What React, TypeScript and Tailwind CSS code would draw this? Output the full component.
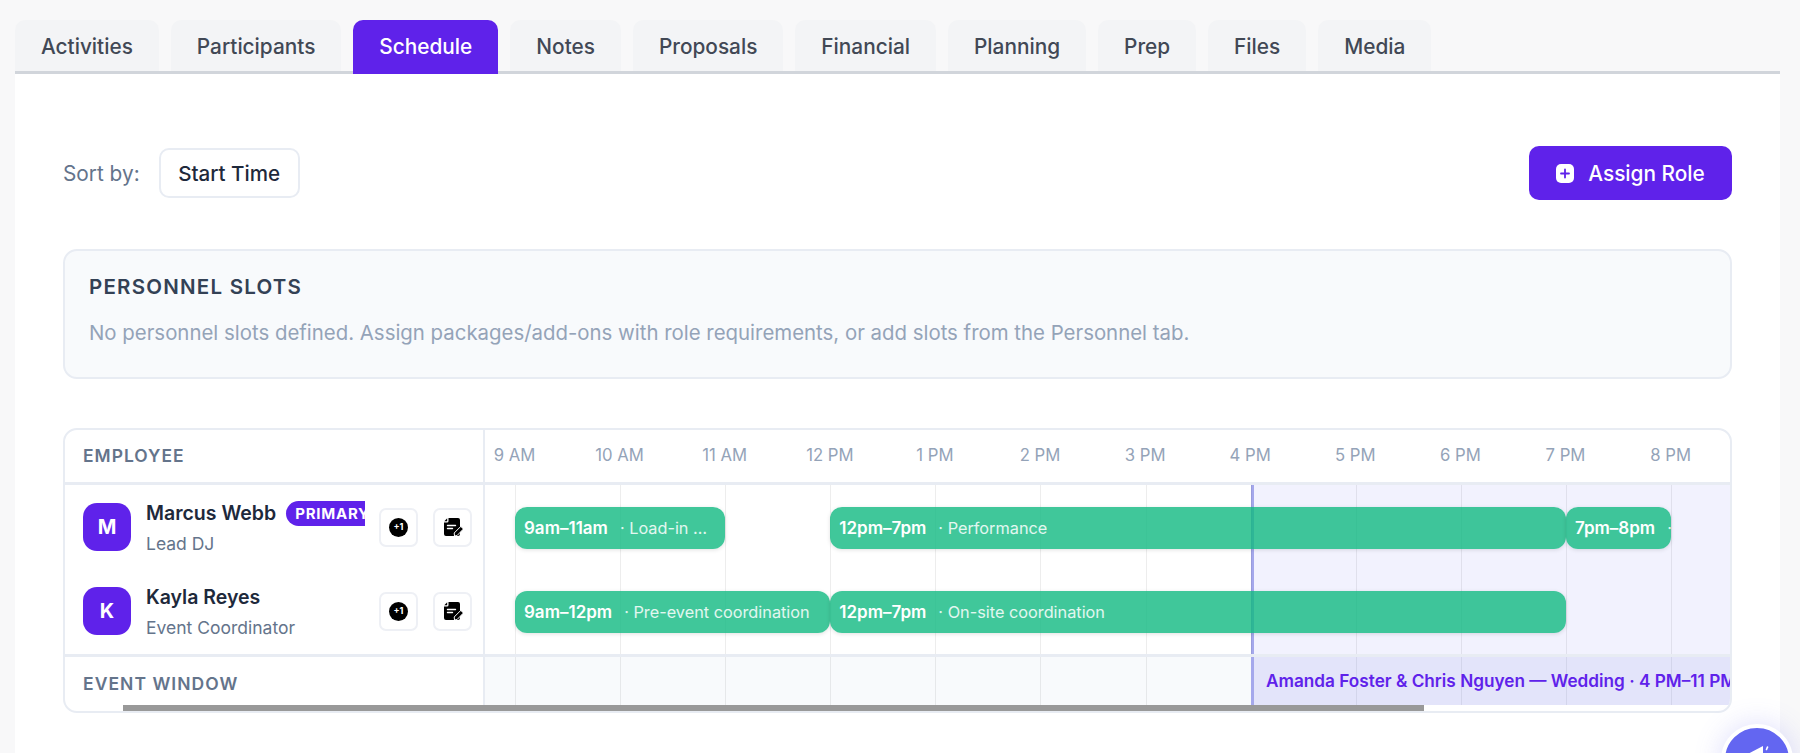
import { Fragment } from "react";

const TABS = ["Activities", "Participants", "Schedule", "Notes", "Proposals", "Financial", "Planning", "Prep", "Files", "Media"];
const HOURS = ["9 AM", "10 AM", "11 AM", "12 PM", "1 PM", "2 PM", "3 PM", "4 PM", "5 PM", "6 PM", "7 PM", "8 PM"];
const HOUR_W = 105.1;
const FIRST_LINE = 30;

const BARS = [
  { row: 0, start: 9, end: 11, time: "9am–11am", label: "Load-in & setup" },
  { row: 0, start: 12, end: 19, time: "12pm–7pm", label: "Performance" },
  { row: 0, start: 19, end: 20, time: "7pm–8pm", label: "Load-out" },
  { row: 1, start: 9, end: 12, time: "9am–12pm", label: "Pre-event coordination" },
  { row: 1, start: 12, end: 19, time: "12pm–7pm", label: "On-site coordination" },
];

const PEOPLE = [
  { initial: "M", name: "Marcus Webb", role: "Lead DJ", primary: true },
  { initial: "K", name: "Kayla Reyes", role: "Event Coordinator", primary: false },
];

function PlusSquare() {
  return (
    <svg width="18" height="19" viewBox="0 0 18 19" className="shrink-0">
      <rect x="0" y="0" width="18" height="19" rx="5" fill="#fff" />
      <path d="M9 5.5v8M5 9.5h8" stroke="#5f22ea" strokeWidth="1.8" strokeLinecap="round" />
    </svg>
  );
}

function NoteIcon() {
  return (
    <svg width="20" height="20" viewBox="0 0 20 20">
      <path d="M5.5 1H15a2 2 0 0 1 2 2v14a2 2 0 0 1-2 2H3a2 2 0 0 1-2-2V5.5H4a1.5 1.5 0 0 0 1.5-1.5z" fill="#000" />
      <path d="M1.3 4.2 4.2 1.2V4.2z" fill="#000" />
      <path d="M4.5 8.5h8M4.5 11.5h5" stroke="#fff" strokeWidth="1.4" strokeLinecap="round" />
      <path d="M11.5 19l-.3-3 6.6-6.6 2.6 2.6-6.4 6.6z" fill="#000" stroke="#fff" strokeWidth="1" />
    </svg>
  );
}

function IconButton({ children }: { children: React.ReactNode }) {
  return (
    <div className="flex h-[39px] w-[39px] items-center justify-center rounded-[7px] border-2 border-[#eef0f5] bg-white">
      {children}
    </div>
  );
}

function PersonRow({ p }: { p: (typeof PEOPLE)[number] }) {
  return (
    <div className="flex h-[84px] items-center pl-[18px]">
      <div className="flex h-12 w-12 shrink-0 items-center justify-center rounded-[14px] bg-[#5f22ea] text-[20px] font-bold text-white">
        {p.initial}
      </div>
      <div className="ml-[15px] w-[219px] shrink-0 overflow-hidden pt-[3px]">
        <div className="flex items-center gap-[10px]">
          <span className="shrink-0 text-[19.5px] leading-[26px] font-semibold whitespace-nowrap text-[#1e293b]">{p.name}</span>
          {p.primary && (
            <span className="shrink-0 rounded-l-full bg-[#5f22ea] py-[2px] pr-2 pl-[9px] text-[15px] leading-[21px] font-bold tracking-[0.05em] whitespace-nowrap text-white">
              PRIMARY
            </span>
          )}
        </div>
        <div className="mt-[5px] text-[17.5px] leading-[26px] text-[#64748b]">{p.role}</div>
      </div>
      <div className="ml-[14px] flex gap-[15px]">
        <IconButton>
          <div className="flex h-[19px] w-[19px] items-center justify-center rounded-full bg-black text-[9px] font-bold text-white">
            +1
          </div>
        </IconButton>
        <IconButton>
          <NoteIcon />
        </IconButton>
      </div>
    </div>
  );
}

function GridLines() {
  return (
    <div className="absolute inset-y-0 left-[30px] flex">
      {HOURS.map((h) => (
        <div key={h} className="w-[105.1px] shrink-0 border-l border-black/[0.07]" />
      ))}
    </div>
  );
}

function Bar({ b }: { b: (typeof BARS)[number] }) {
  return (
    <div
      className="absolute flex h-[42px] items-center overflow-hidden rounded-[12px] bg-[#10b981]/80 pt-[1px] pr-[14px] pl-[9px] shadow-[0_1px_4px_rgba(0,0,0,0.12)]"
      style={{
        left: FIRST_LINE + (b.start - 9) * HOUR_W,
        width: (b.end - b.start) * HOUR_W,
        top: 22 + b.row * 84,
      }}
    >
      <span className="shrink-0 text-[17px] font-semibold whitespace-nowrap text-white">{b.time}</span>
      <span className="ml-[12px] min-w-[16px] truncate text-[16.3px] text-white/85">· {b.label}</span>
    </div>
  );
}

export default function App() {
  return (
    <div className="relative h-[753px] overflow-hidden bg-[#f8f8f9] pt-5 pr-5 pl-[15px] font-['Inter',sans-serif]">
      <div className="flex h-[54px] gap-[12px] border-b-[3px] border-[#d1d5db]">
        {TABS.map((t) => (
          <div
            key={t}
            className={
              t === "Schedule"
                ? "h-[54px] rounded-t-[10px] bg-[#5f22ea] px-[26px] pt-[14px] text-[20.8px] leading-[26px] font-medium text-white"
                : "h-[51px] rounded-t-[10px] bg-[#f3f4f6] px-[26px] pt-[14px] text-[20.8px] leading-[26px] font-medium text-[#414855]"
            }
          >
            {t}
          </div>
        ))}
      </div>

      <div className="h-[679px] bg-white px-12 pt-[72px]">
        <div className="flex h-[54px] items-center justify-between">
          <div className="flex items-center gap-[19px]">
            <span className="pt-[1px] text-[20.8px] text-[#64748b]">Sort by:</span>
            <div className="flex h-[50px] w-[141px] items-center justify-center rounded-[10px] border-2 border-[#e8ecf3] pt-[2px] text-[20.6px] font-medium text-[#1e293b]">
              Start Time
            </div>
          </div>
          <div className="flex h-[54px] w-[203px] items-center justify-center gap-[14px] rounded-[10px] bg-[#5f22ea] text-[20.8px] font-medium text-white">
            <PlusSquare />
            <span className="pt-[2px]">Assign Role</span>
          </div>
        </div>

        <div className="mt-[49px] h-[130px] rounded-[14px] border-2 border-[#e8ecf3] bg-[#f8fafc] px-6 pt-[22px]">
          <div className="text-[20.5px] leading-[28px] font-semibold tracking-[0.06em] text-[#334155]">PERSONNEL SLOTS</div>
          <div className="mt-[18px] text-[20.4px] leading-[28px] text-[#94a3b8]">
            No personnel slots defined. Assign packages/add-ons with role requirements, or add slots from the Personnel tab.
          </div>
        </div>

        <div className="relative mt-[49px] h-[285px] overflow-hidden rounded-[14px] border-2 border-[#e8ecf3] bg-white">
          <div className="grid h-full grid-cols-[420px_1fr]">
            <div className="flex flex-col border-r-2 border-[#e8ecf3]">
              <div className="flex h-[55px] shrink-0 items-center border-b-[3px] border-[#e8ecf3] pl-[18px] text-[17.4px] font-semibold tracking-[0.06em] text-[#64748b]">
                EMPLOYEE
              </div>
              <div className="h-[172px] shrink-0 border-b-[3px] border-[#e8ecf3]">
                {PEOPLE.map((p) => (
                  <Fragment key={p.name}>
                    <PersonRow p={p} />
                  </Fragment>
                ))}
              </div>
              <div className="flex h-[54px] items-center pl-[18px] text-[17.5px] font-semibold tracking-[0.06em] text-[#64748b]">
                EVENT WINDOW
              </div>
            </div>

            <div className="flex min-w-0 flex-col overflow-hidden">
              <div className="flex h-[55px] shrink-0 items-center border-b-[3px] border-[#e8ecf3]">
                <div className="-ml-[23px] flex">
                  {HOURS.map((h) => (
                    <div key={h} className="w-[105.1px] shrink-0 text-center text-[16.7px] text-[#94a3b8]">
                      {h}
                    </div>
                  ))}
                </div>
              </div>

              <div className="relative h-[172px] shrink-0 border-b-[3px] border-[#e8ecf3]">
                <div className="absolute inset-y-0 right-0 left-[766px] border-l-[3px] border-[#a5a8ec] bg-[#6366f1]/[0.085]" />
                <GridLines />
                {BARS.map((b) => (
                  <Bar key={b.row + b.time} b={b} />
                ))}
              </div>

              <div className="relative h-[48px] shrink-0 bg-[#f8fafc]">
                <GridLines />
                <div className="absolute inset-y-0 right-0 left-[766px] flex items-center overflow-hidden border-l-[3px] border-[#a5a8ec] bg-[#6366f1]/[0.14] pl-[12px]">
                  <span className="text-[17.2px] font-semibold whitespace-nowrap text-[#5f22ea]">
                    Amanda Foster &amp; Chris Nguyen — Wedding · 4 PM–11 PM
                  </span>
                </div>
              </div>
            </div>
          </div>
          {/* overlay scrollbar thumb */}
          <div className="absolute bottom-0 left-[58px] h-[6px] w-[1301px] bg-[#999]" />
        </div>
      </div>

      {/* floating help button */}
      <div className="absolute top-[724px] left-[1721px] flex h-[72px] w-[72px] items-start justify-center rounded-full border-4 border-white bg-[#6366f1] shadow-[0_0_28px_rgba(99,102,241,0.22)]">
        <svg width="40" height="40" viewBox="0 0 40 40" className="mt-[13px]">
          <path d="M5 16 26 5v25z" fill="#fff" />
          <path d="M29.5 8.5l1-2.5" stroke="#fff" strokeWidth="1.6" strokeLinecap="round" />
        </svg>
      </div>
    </div>
  );
}
